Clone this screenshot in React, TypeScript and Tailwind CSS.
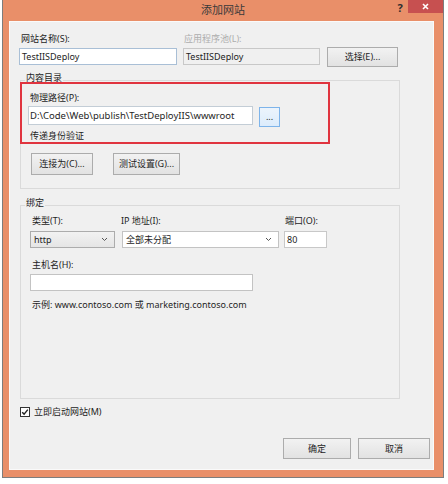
import React from "react";

const Btn = ({ children, className = "" }: { children: React.ReactNode; className?: string }) => (
  <div
    className={
      "flex items-center justify-center border border-[#acacac] bg-linear-to-b from-[#f2f2f2] to-[#e2e2e2] text-[9px] leading-[12px] text-[#1e1e1e] " +
      className
    }
  >
    {children}
  </div>
);

const Chevron = () => (
  <svg width="7" height="5" viewBox="0 0 7 5" className="shrink-0">
    <path d="M1 1 L3.5 3.5 L6 1" fill="none" stroke="#555" strokeWidth="1" />
  </svg>
);

export default function App() {
  return (
    <div className="w-[448px] h-[484px] bg-white font-['Noto_Sans','Noto_Sans_CJK_SC',sans-serif] text-[#1e1e1e] text-[9px] leading-[12px]">
      <div className="ml-[2px] w-[442px] h-[478px] bg-[#e98f69] border-l border-r border-b border-[#7d7d7d] flex flex-col">
        {/* title bar */}
        <div className="h-[21px] flex items-start shrink-0">
          <div className="w-[51px]" />
          <div className="flex-1 text-center text-[11px] leading-[20px] text-[#3a3a3a]">添加网站</div>
          <div className="w-[51px] flex items-start">
            <div className="w-[16px] text-center text-[11px] leading-[15px] font-bold text-[#2e2e2e]">?</div>
            <div className="w-[35px] h-[13px] bg-[#c75050] flex items-center justify-center">
              <svg width="7" height="7" viewBox="0 0 7 7">
                <path d="M1 1 L6 6 M6 1 L1 6" stroke="#ffffff" strokeWidth="1.6" />
              </svg>
            </div>
          </div>
        </div>

        {/* content */}
        <div className="ml-[6px] mr-[9px] h-[449px] shrink-0 bg-[#f0f0f0] border border-[#fafafa] pl-[9px] pt-[11px]">
          {/* row 1 */}
          <div className="flex">
            <div className="w-[158px] pl-[2px]">网站名称(S):</div>
            <div className="w-[137px] ml-[6px] pl-[1px] text-[#adadad]">应用程序池(L):</div>
          </div>
          <div className="mt-[3px] flex items-start">
            <div className="w-[158px] h-[17px] bg-white border border-[#a9bfd6] px-[2px] leading-[15px]">TestIISDeploy</div>
            <div className="w-[137px] h-[17px] ml-[6px] bg-[#f0f0f0] border border-[#c8c8c8] px-[2px] leading-[15px]">TestIISDeploy</div>
            <Btn className="w-[71px] h-[20px] ml-[7px] -mt-[1px]">选择(E)...</Btn>
          </div>

          {/* group 1 */}
          <fieldset className="ml-[1px] mt-[5px] w-[380px] h-[117px] border border-[#dadada]">
            <legend className="ml-[4px] px-[1px] pb-[4px] leading-[12px]">内容目录</legend>
            <div className="-ml-px -mt-[6px] w-[310px] h-[62px] border-2 border-[#e0343f]">
              <div className="pl-[8px] pt-[8px]">物理路径(P):</div>
              <div className="mt-[2px] ml-[6px] flex items-start">
                <div className="w-[225px] h-[19px] bg-white border border-[#c3cdd6] px-[1px] leading-[17px] text-[9.5px]">
                  D:\Code\Web\publish\TestDeployIIS\wwwroot
                </div>
                <div className="ml-[6px] mt-[1px] w-[21px] h-[20px] border border-[#7eb4ea] bg-linear-to-b from-[#ecf4fc] to-[#dcecfc] flex items-center justify-center leading-[10px]">
                  ...
                </div>
              </div>
              <div className="pl-[8px] mt-[3px]">传递身份验证</div>
            </div>
            <div className="mt-[9px] ml-[10px] flex gap-[20px]">
              <Btn className="w-[62px] h-[22px]">连接为(C)...</Btn>
              <Btn className="w-[67px] h-[22px]">测试设置(G)...</Btn>
            </div>
          </fieldset>

          {/* group 2 */}
          <fieldset className="ml-[1px] mt-[8px] w-[380px] h-[202px] border border-[#dadada]">
            <legend className="ml-[4px] px-[1px] pb-[4px] leading-[12px]">绑定</legend>
            <div className="mt-[2px] ml-[9px] flex">
              <div className="w-[85px] pl-[2px]">类型(T):</div>
              <div className="w-[157px] ml-[6px]">IP 地址(I):</div>
              <div className="w-[43px] ml-[6px] pl-[1px]">端口(O):</div>
            </div>
            <div className="mt-[4px] ml-[9px] flex">
              <div className="w-[85px] h-[17px] border border-[#acacac] bg-linear-to-b from-[#f2f2f2] to-[#e5e5e5] flex items-center justify-between pl-[3px] pr-[6px]">
                <span>http</span>
                <Chevron />
              </div>
              <div className="w-[157px] h-[17px] ml-[7px] border border-[#c3c3c3] bg-white flex items-center justify-between pl-[3px] pr-[6px]">
                <span>全部未分配</span>
                <Chevron />
              </div>
              <div className="w-[43px] h-[17px] ml-[5px] border border-[#c8c8c8] bg-white pl-[2px] leading-[15px]">80</div>
            </div>
            <div className="mt-[11px] ml-[9px] pl-[2px]">主机名(H):</div>
            <div className="mt-[3px] ml-[9px] w-[223px] h-[17px] border border-[#c3c3c3] bg-white" />
            <div className="mt-[8px] ml-[9px] pl-[2px]">示例: www.contoso.com 或 marketing.contoso.com</div>
          </fieldset>

          {/* checkbox */}
          <div className="mt-[7px] ml-[1px] flex items-center">
            <div className="w-[10px] h-[10px] border border-[#333] bg-white flex items-center justify-center">
              <svg width="8" height="8" viewBox="0 0 8 8">
                <path d="M1.2 4.2 L3.1 6.1 L6.8 1.6" fill="none" stroke="#222" strokeWidth="1.4" />
              </svg>
            </div>
            <div className="ml-[4px]">立即启动网站(M)</div>
          </div>

          {/* buttons */}
          <div className="mt-[20px] pr-[3px] flex justify-end gap-[7px]">
            <Btn className="w-[68px] h-[21px]">确定</Btn>
            <Btn className="w-[72px] h-[21px]">取消</Btn>
          </div>
        </div>
      </div>
    </div>
  );
}
